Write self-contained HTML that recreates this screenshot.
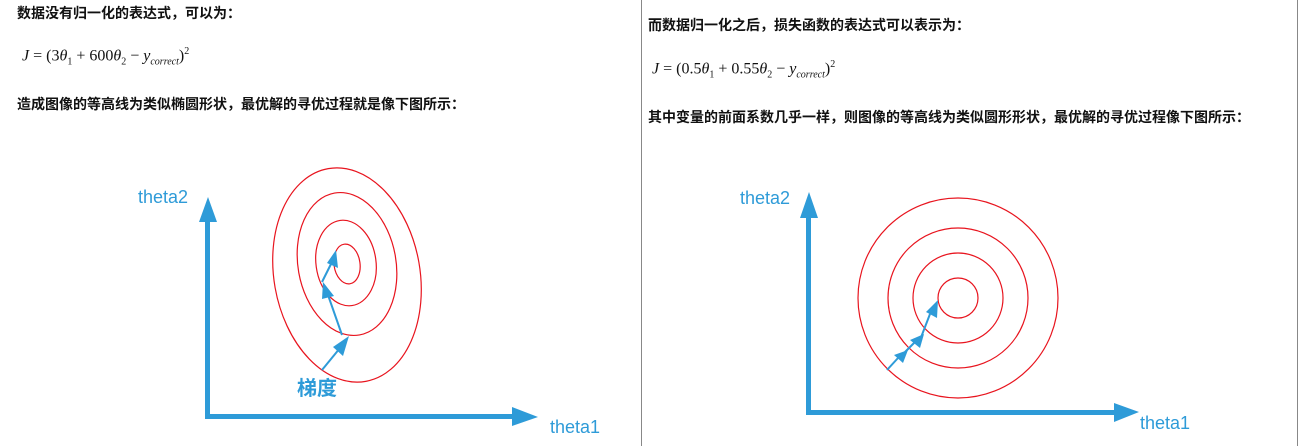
<!DOCTYPE html>
<html><head><meta charset="utf-8"><style>
body{margin:0;width:1300px;height:446px;background:#fff;position:relative;overflow:hidden;font-family:"Liberation Sans","Noto Sans CJK SC",sans-serif}
.t{position:absolute;font-size:14px;font-weight:bold;color:#111;white-space:nowrap}
.f{position:absolute;font-family:"Liberation Serif",serif;font-size:16px;font-style:italic;color:#111;white-space:nowrap}
.f span{font-style:normal}
sub{font-size:10px}sup{font-size:10px}
</style></head><body>
<div style="position:absolute;left:641px;top:0;width:1px;height:446px;background:#888"></div>
<div style="position:absolute;left:1297px;top:0;width:1px;height:446px;background:#888"></div>
<div class="t" style="left:17px;top:3px">数据没有归一化的表达式，可以为：</div>
<div class="f" style="left:22px;top:46px">J <span>= (3</span>θ<sub><span>1</span></sub> <span>+ 600</span>θ<sub><span>2</span></sub> <span>−</span> y<sub>correct</sub><span>)</span><sup><span>2</span></sup></div>
<div class="t" style="left:17px;top:94px">造成图像的等高线为类似椭圆形状，最优解的寻优过程就是像下图所示：</div>
<div class="t" style="left:648px;top:15px">而数据归一化之后，损失函数的表达式可以表示为：</div>
<div class="f" style="left:652px;top:59px">J <span>= (0.5</span>θ<sub><span>1</span></sub> <span>+ 0.55</span>θ<sub><span>2</span></sub> <span>−</span> y<sub>correct</sub><span>)</span><sup><span>2</span></sup></div>
<div class="t" style="left:648px;top:107px">其中变量的前面系数几乎一样，则图像的等高线为类似圆形形状，最优解的寻优过程像下图所示：</div>
<svg width="1300" height="446" style="position:absolute;left:0;top:0">
<g fill="#2e9bd8" stroke="none">
<rect x="205" y="218" width="5" height="201"/><polygon points="199,222 217,222 208,197"/>
<rect x="205" y="414" width="310" height="5"/><polygon points="512,407 512,426 538,417"/>
<rect x="806" y="214" width="5" height="201"/><polygon points="800,218 818,218 809,192"/>
<rect x="806" y="410" width="312" height="5"/><polygon points="1114,403 1114,422 1139,412"/>
</g>
<g fill="#2e9bd8" font-family="Liberation Sans,sans-serif" font-size="18">
<text x="138" y="203">theta2</text><text x="550" y="433">theta1</text>
<text x="740" y="204">theta2</text><text x="1140" y="429">theta1</text>
<text x="297" y="395" font-size="20" font-weight="bold" font-family="Liberation Sans,Noto Sans CJK SC,sans-serif">梯度</text>
</g>
<g fill="none" stroke="#e8141e" stroke-width="1.2">
<ellipse cx="347" cy="275" rx="73" ry="108" transform="rotate(-10 347 275)"/>
<ellipse cx="347" cy="264" rx="49" ry="72" transform="rotate(-10 347 264)"/>
<ellipse cx="346" cy="263" rx="30" ry="43" transform="rotate(-8 346 263)"/>
<ellipse cx="347" cy="264" rx="13" ry="20" transform="rotate(-8 347 264)"/>
<circle cx="958" cy="298" r="100"/><circle cx="958" cy="298" r="70"/>
<circle cx="958" cy="298" r="45"/><circle cx="958" cy="298" r="20"/>
</g>
<g stroke="#2e9bd8" stroke-width="2" fill="#2e9bd8">
<line x1="322" y1="370" x2="340" y2="348"/><polygon points="349,336 343,356 333,347" stroke="none"/>
<line x1="342" y1="335" x2="328" y2="295"/><polygon points="323,282 334,296 322,299" stroke="none"/>
<line x1="322" y1="282" x2="332" y2="262"/><polygon points="336,250 338,268 327,263" stroke="none"/>
<line x1="887" y1="370" x2="898" y2="358"/><polygon points="908,350 903,363 894,355" stroke="none"/>
<line x1="905" y1="352" x2="915" y2="342"/><polygon points="924,334 920,348 910,340" stroke="none"/>
<line x1="920" y1="340" x2="930" y2="314"/><polygon points="938,300 937,318 926,312" stroke="none"/>
</g>
</svg>
</body></html>
